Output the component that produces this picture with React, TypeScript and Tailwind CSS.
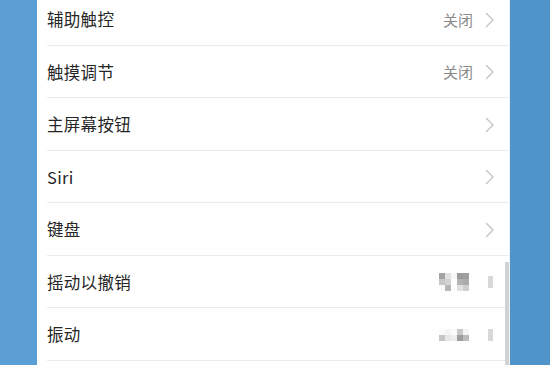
import React from "react";

const Chevron = ({ color = "#c4c4c8" }: { color?: string }) => (
  <svg width="10" height="16" viewBox="0 0 10 16" fill="none">
    <path d="M1.5 1.5 L8 8 L1.5 14.5" stroke={color} strokeWidth="1.4" strokeLinecap="round" strokeLinejoin="round" />
  </svg>
);

const Mosaic = ({ rows }: { rows: string[][] }) => (
  <div className="flex flex-col">
    {rows.map((r, i) => (
      <div key={i} className="flex">
        {r.map((c, j) => (
          <div key={j} className="w-[6px] h-[6px]" style={{ background: c }} />
        ))}
      </div>
    ))}
  </div>
);

type Row = { label: string; value?: string; mosaic?: string[][]; chevMosaic?: boolean };

const rows: Row[] = [
  { label: "辅助触控", value: "关闭" },
  { label: "触摸调节", value: "关闭" },
  { label: "主屏幕按钮" },
  { label: "Siri" },
  { label: "键盘" },
  {
    label: "摇动以撤销",
    mosaic: [
      ["#a3a3a3", "#e2e2e2", "#f6f6f6", "#9a9a9a", "#a0a0a0"],
      ["#c8c8c8", "#d4d4d4", "#ffffff", "#b3b3b3", "#ababab"],
      ["#fbfbfb", "#b6b6b6", "#fdfdfd", "#e0e0e0", "#cfcfcf"],
    ],
    chevMosaic: true,
  },
  {
    label: "振动",
    mosaic: [
      ["#fafafa", "#f4f4f4", "#fafafa", "#c8c8c8", "#f4f4f4"],
      ["#c6c6c6", "#e6e6e6", "#eeeeee", "#9e9e9e", "#bcbcbc"],
    ],
    chevMosaic: true,
  },
];

export default function App() {
  return (
    <div
      className="w-[550px] h-[365px] overflow-hidden flex bg-[#4f95cc]"
      style={{ fontFamily: '"Noto Sans CJK SC", "Noto Sans", sans-serif' }}
    >
      <div className="w-[37px] h-full bg-[#5b9fd4]" />
      <div className="relative w-[473px] h-full bg-white overflow-hidden border-r border-[#eef2f5]">
        <div className="-mt-[7px]">
          {rows.map((r) => (
            <div
              key={r.label}
              className="ml-[10px] h-[52.5px] pt-[2px] flex items-center border-b-[1.5px] border-[#ebebeb] pr-[14px]"
            >
              <span className="text-[16.5px] text-[#262626] tracking-[0.3px]">{r.label}</span>
              <div className="ml-auto flex items-center">
                {r.value && <span className="text-[15px] text-[#8a8a8a] mr-[12px]">{r.value}</span>}
                {r.mosaic && (
                  <div className="mr-[16px]">
                    <Mosaic rows={r.mosaic} />
                  </div>
                )}
                {r.chevMosaic ? (
                  <div className="w-[10px] flex justify-center">
                    <div className="w-[5px] h-[12px] bg-[#d8d8d8]" />
                  </div>
                ) : (
                  <Chevron />
                )}
              </div>
            </div>
          ))}
        </div>
        <div className="absolute right-[0px] top-[262px] bottom-0 w-[4px] bg-[#d2d2d2]" />
      </div>
      <div className="flex-1 h-full bg-[#4f95cc]" />
    </div>
  );
}
